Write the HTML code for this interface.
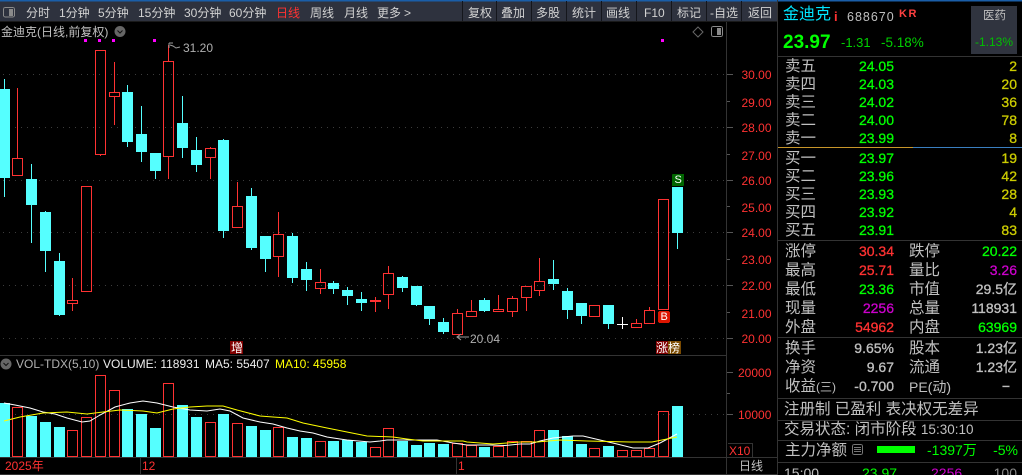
<!DOCTYPE html>
<html><head><meta charset="utf-8">
<style>
html,body{margin:0;padding:0;background:#000;}
#p{position:relative;width:1022px;height:475px;overflow:hidden;background:#000;font-family:"Liberation Sans","WenQuanYi Zen Hei","Noto Sans CJK SC",sans-serif;color:#c0c0c0;}
#p div{position:absolute;white-space:nowrap;line-height:1;}
.t{font-size:12px;top:7px;color:#d2d2d2;}
.l{font-size:15.5px;left:785px;}
.l2{font-size:15.5px;left:909px;}
.v{font-size:14px;right:128px;-webkit-text-stroke:0.3px currentColor;}
.q{font-size:14px;right:5px;-webkit-text-stroke:0.3px currentColor;}
.g{color:#00ff00;} .r{color:#ff3232;} .y{color:#cccc00;} .m{color:#cc00cc;}
.a{font-size:12px;color:#ff3232;left:741.5px;}
svg{position:absolute;left:0;top:0;}
</style></head><body><div id="p">
<svg width="1022" height="475" shape-rendering="crispEdges">
<rect x="0" y="0" width="777" height="21" fill="#2e323e"/>
<rect x="0" y="0" width="1022" height="1.5" fill="#1a5ea8"/>
<rect x="0" y="21" width="777" height="1" fill="#1a1a1a"/>
<path d="M462.5 1v20M496.5 1v20M531.5 1v20M566.5 1v20M601.5 1v20M636.5 1v20M671.5 1v20M706.5 1v20M741.5 1v20" stroke="#14161c"/>
<rect x="3.5" y="7.5" width="11" height="9.5" rx="2" fill="none" stroke="#8a8a8a"/><rect x="9" y="9" width="4" height="7" fill="#8a8a8a"/>
<path d="M0 355.5H726M0 457.5H726M0 474.5H777M726.5 22V475M777.5 0V475M140.5 458v16M456.5 458v16M728 443.5h24M752.5 443v15M727 457.5h50" stroke="#333"/>
<path d="M3 74.5H726M3 127.5H726M3 180.5H726M3 232.5H726M3 285.5H726M3 338.5H726M3 414.5H726" stroke="#3c3c3c" stroke-dasharray="1 5"/>
<path d="M727 74.5h6M727 127.5h6M727 180.5h6M727 232.5h6M727 285.5h6M727 338.5h6M727 414.5h6M727 372.5h6M727 101.5h3M727 154.5h3M727 206.5h3M727 259.5h3M727 312.5h3M727 393.5h3" stroke="#555"/>
<g fill="#ff00ff"><rect x="84" y="39" width="3" height="3"/><rect x="98" y="39" width="3" height="3"/><rect x="112" y="39" width="3" height="3"/><rect x="153" y="39" width="3" height="3"/><rect x="661" y="39" width="3" height="3"/></g>
<path d="M693 32l5-5 5 5-5 5z" fill="none" stroke="#666" shape-rendering="auto"/>
<rect x="711.5" y="26.5" width="11" height="10" rx="2" fill="none" stroke="#8a8a8a"/><rect x="717" y="28" width="4" height="7" fill="#8a8a8a"/>
<circle cx="120" cy="31.5" r="5.5" fill="#666" shape-rendering="auto"/><path d="M117.500 30.500l2.500 2.500 2.500-2.500" fill="none" stroke="#111" shape-rendering="auto"/>
<circle cx="6" cy="364" r="5.5" fill="#666" shape-rendering="auto"/><path d="M3.500 363l2.500 2.500 2.500-2.500" fill="none" stroke="#111" shape-rendering="auto"/>

<path fill="#55ffff" d="M0 89h10v89H0zM26 179h11v26H26zM40 212h11v39H40zM54 261h11v54H54zM122 92h11v50h-11zM136 134h11v18h-11zM150 153h11v18h-11zM177 123h11v25h-11zM191 150h11v15h-11zM218 140h11v91h-11zM246 196h11v52h-11zM260 236h11v23h-11zM287 236h11v42h-11zM301 269h11v11h-11zM328 283h11v6h-11zM342 290h11v6h-11zM356 299h11v4h-11zM397 277h11v11h-11zM411 286h11v19h-11zM424 306h11v13h-11zM438 322h11v10h-11zM479 300h11v11h-11zM548 279h11v5h-11zM562 291h11v19h-11zM576 303h11v13h-11zM603 305h11v19h-11zM672 187h11v46h-11z"/>
<path stroke="#55ffff" fill="none" d="M4.500 79v118M31.500 164v79M45.500 211v61M59.500 253v63M127.500 85v62M141.500 106v56M155.500 153v26M182.500 96v62M196.500 137v35M223.500 139v99M251.500 188v62M265.500 236v36M292.500 233v50M306.500 262v29M333.500 281v13M347.500 287v18M361.500 292v19M402.500 276v16M416.500 286v20M429.500 306v19M443.500 318v16M484.500 298v14M553.500 260v30M567.500 288v31M581.500 303v21M608.500 305v24M677.500 187v62"/>
<path stroke="#ff3232" fill="none" d="M12.500 158.500h10v17h-10zM67.500 300.500h10v3h-10zM81.500 186.500h10v105h-10zM95.500 50.500h10v104h-10zM109.500 92.500h10v4h-10zM163.500 61.500h10v95h-10zM205.500 148.500h10v9h-10zM232.500 206.500h10v21h-10zM273.500 234.500h10v22h-10zM315.500 282.500h10v6h-10zM383.500 273.500h10v21h-10zM452.500 313.500h10v21h-10zM466.500 311.500h10v5h-10zM493.500 309.500h10v2h-10zM507.500 298.500h10v13h-10zM521.500 286.500h10v11h-10zM534.500 281.500h10v9h-10zM589.500 305.500h10v11h-10zM631.500 323.500h10v4h-10zM644.500 310.500h10v13h-10zM658.500 199.500h10v110h-10z
M17.500 88v70M72.500 278v22M72.500 304v7M100.500 155v1M114.500 62v30M114.500 97v28M168.500 45v16M168.500 157v22M210.500 147v1M210.500 158v21M237.500 182v24M278.500 212v22M278.500 257v20M320.500 269v13M320.500 289v5M375.500 297v15M388.500 266v7M388.500 295v14M457.500 309v4M471.500 300v11M498.500 295v14M512.500 296v2M512.500 312v5M526.500 298v13M539.500 258v23M539.500 291v5M636.500 319v4M649.500 307v3"/>
<rect x="370" y="300" width="11" height="2" fill="#ff3232"/>
<path d="M622.500 317v12M617 324.500h11" stroke="#fff"/>

<path stroke="#9a9a9a" fill="none" d="M169 43h4M169 43v5M170 45l3 1 3 2 4-1" shape-rendering="auto"/>
<path stroke="#9a9a9a" fill="none" d="M457 337h12M461 334l-4 3 4 3" shape-rendering="auto"/>

<rect x="230" y="341" width="13" height="13" fill="#800000"/>
<rect x="656" y="341" width="12" height="13" fill="#800000"/>
<rect x="668" y="341" width="13" height="13" fill="#7a4a00"/>
<rect x="672" y="174" width="12" height="12" rx="1" fill="#006600"/>
<rect x="658" y="311" width="12" height="12" rx="2" fill="#dd1500"/>

<path fill="#55ffff" d="M0 403h10v54H0zM26 416h11v41H26zM40 422h11v35H40zM54 427h11v30H54zM122 409h11v48h-11zM136 414h11v43h-11zM150 428h11v29h-11zM177 405h11v52h-11zM191 417h11v40h-11zM218 414h11v43h-11zM246 426h11v31h-11zM260 430h11v27h-11zM287 437h11v20h-11zM301 438h11v19h-11zM328 441h11v16h-11zM342 440h11v17h-11zM356 442h11v15h-11zM397 441h11v16h-11zM411 445h11v12h-11zM424 443h11v14h-11zM438 444h11v13h-11zM479 447h11v10h-11zM548 430h11v27h-11zM562 436h11v21h-11zM576 444h11v13h-11zM603 446h11v11h-11zM672 406h11v51h-11z"/>
<path stroke="#ff3232" fill="none" d="M12.500 407.500h10v49h-10zM67.500 430.500h10v26h-10zM81.500 417.500h10v39h-10zM95.500 375.500h10v81h-10zM109.500 390.500h10v66h-10zM163.500 383.500h10v73h-10zM205.500 422.500h10v34h-10zM232.500 423.500h10v33h-10zM273.500 427.500h10v29h-10zM315.500 441.500h10v15h-10zM370.500 447.500h10v9h-10zM383.500 428.500h10v28h-10zM452.500 443.500h10v13h-10zM466.500 445.500h10v11h-10zM493.500 446.500h10v10h-10zM507.500 441.500h10v15h-10zM521.500 441.500h10v15h-10zM534.500 430.500h10v26h-10zM589.500 448.500h10v8h-10zM617.500 450.500h10v6h-10zM631.500 450.500h10v6h-10zM644.500 448.500h10v8h-10zM658.500 411.500h10v45h-10z"/>
<path stroke="#fff" fill="none" shape-rendering="auto" d="M4 403L15 405L30 408L43 412L55 414L67 418L82 422L90 421L100 415L115 407L130 403L143 401L157 403L173 407L190 410L207 411L220 409L230 411L243 418L260 422L273 424L287 428L300 431L313 433L327 437L340 439L347 440L370 442L380 441L387 440L407 440L437 440L453 443L467 445L490 445L505 445.500L520 444L530 444L540 441L553 438L573 436L583 436L600 440L617 444L633 448L648 448L660 443L677 434"/>
<path stroke="#ff0" fill="none" shape-rendering="auto" d="M4 421L20 417L43 413L67 412L87 414L103 412L120 410L143 411L157 413L173 409L190 407L207 406L223 406L237 410L260 416L273 417L287 418L303 423L327 428L347 432L367 436L393 437L407 439L423 441L463 441L467 442L493 444L520 442L537 442L560 440L587 441L630 442L652 442L677 437"/>

<rect x="778" y="56" width="244" height="1" fill="#333"/>
<rect x="778" y="147" width="135" height="1" fill="#c8962a"/><rect x="913" y="147" width="109" height="1" fill="#3a7fc0"/>
<rect x="778" y="240" width="244" height="1" fill="#333"/><rect x="778" y="337" width="244" height="1" fill="#333"/>
<rect x="778" y="398" width="244" height="1" fill="#333"/><rect x="778" y="420" width="244" height="1" fill="#333"/>
<rect x="778" y="440" width="244" height="1" fill="#333"/><rect x="778" y="462" width="244" height="1" fill="#333"/>
<rect x="971" y="6" width="46" height="48" fill="#30343f"/>
<rect x="877" y="446" width="38" height="7" fill="#00ff00"/>
<rect x="852.500" y="444.500" width="10" height="10" rx="2" fill="none" stroke="#777"/><path d="M854 447.500h7M854 449.500h7M854 451.500h7" stroke="#777"/>
</svg>

<div class="t" style="left:26px">分时</div><div class="t" style="left:59px">1分钟</div><div class="t" style="left:98px">5分钟</div><div class="t" style="left:138px">15分钟</div><div class="t" style="left:184px">30分钟</div><div class="t" style="left:229px">60分钟</div>
<div class="t r" style="left:276px;color:#ff3232">日线</div><div class="t" style="left:310px">周线</div><div class="t" style="left:344px">月线</div><div class="t" style="left:377px">更多</div><div class="t" style="left:404px">&gt;</div>
<div class="t" style="left:468px">复权</div><div class="t" style="left:501px">叠加</div><div class="t" style="left:536px">多股</div><div class="t" style="left:572px">统计</div><div class="t" style="left:606px">画线</div><div class="t" style="left:644px">F10</div><div class="t" style="left:677px">标记</div><div class="t" style="left:710px">-自选</div><div class="t" style="left:748px">返回</div>

<div style="left:1px;top:26px;font-size:12px">金迪克(日线,前复权)</div>
<div style="left:183px;top:42px;font-size:12px;color:#b0b0b0">31.20</div>
<div style="left:470px;top:333px;font-size:12px;color:#b0b0b0">20.04</div>
<div style="left:231px;top:341.500px;font-size:12px;color:#fff">增</div>
<div style="left:656px;top:341.500px;font-size:12px;color:#fff">涨</div><div style="left:668px;top:341.500px;font-size:12px;color:#fff">榜</div>
<div style="left:674.500px;top:175px;font-size:11px;color:#fff">S</div><div style="left:660.500px;top:312px;font-size:11px;color:#fff">B</div>

<div class="a" style="top:69px">30.00</div><div class="a" style="top:97px">29.00</div><div class="a" style="top:122px">28.00</div><div class="a" style="top:150px">27.00</div><div class="a" style="top:175px">26.00</div><div class="a" style="top:202px">25.00</div><div class="a" style="top:227px">24.00</div><div class="a" style="top:254px">23.00</div><div class="a" style="top:280px">22.00</div><div class="a" style="top:308px">21.00</div><div class="a" style="top:333px">20.00</div>
<div class="a" style="top:367px;left:738px">20000</div><div class="a" style="top:409px;left:738px">10000</div>
<div class="a" style="top:445px;left:729px;font-size:12px">X10</div>
<div style="left:739px;top:460px;font-size:12px">日线</div>

<div style="left:16px;top:358px;font-size:12px;color:#b0b0b0">VOL-TDX(5,10)</div>
<div style="left:103px;top:358px;font-size:12px;color:#eee">VOLUME: 118931</div>
<div style="left:205px;top:358px;font-size:12px;color:#eee">MA5: 55407</div>
<div style="left:275px;top:358px;font-size:12px;color:#ff0">MA10: 45958</div>
<div class="r" style="left:5px;top:460px;font-size:12px">2025年</div><div class="r" style="left:142px;top:460px;font-size:12px">12</div><div class="r" style="left:458px;top:460px;font-size:12px">1</div>

<div style="left:783px;top:7px;font-size:16px;color:#00e5ff">金迪克</div><div class="r" style="left:834px;top:10px;font-size:13px;font-weight:bold">i</div>
<div style="left:847px;top:11px;font-size:12.500px;letter-spacing:1px;color:#c0c0c0">688670</div>
<div style="left:899px;top:9px;font-size:11px;font-weight:bold;letter-spacing:1.5px;color:#ff4040">KR</div>
<div style="left:983px;top:11px;font-size:11.500px">医药</div><div class="g" style="left:975px;top:36px;font-size:12px;color:#00c000">-1.13%</div>
<div class="g" style="left:783px;top:33px;font-size:19px;font-weight:bold">23.97</div>
<div class="g" style="left:841px;top:36px;font-size:13px;color:#00d000">-1.31</div><div class="g" style="left:881px;top:36px;font-size:13.500px;color:#00d000">-5.18%</div>

<div class="l" style="top:59px">卖五</div><div class="v g" style="top:59px">24.05</div><div class="q y" style="top:59px">2</div>
<div class="l" style="top:77px">卖四</div><div class="v g" style="top:77px">24.03</div><div class="q y" style="top:77px">20</div>
<div class="l" style="top:95px">卖三</div><div class="v g" style="top:95px">24.02</div><div class="q y" style="top:95px">36</div>
<div class="l" style="top:113px">卖二</div><div class="v g" style="top:113px">24.00</div><div class="q y" style="top:113px">78</div>
<div class="l" style="top:131px">卖一</div><div class="v g" style="top:131px">23.99</div><div class="q y" style="top:131px">8</div>
<div class="l" style="top:151px">买一</div><div class="v g" style="top:151px">23.97</div><div class="q y" style="top:151px">19</div>
<div class="l" style="top:169px">买二</div><div class="v g" style="top:169px">23.96</div><div class="q y" style="top:169px">42</div>
<div class="l" style="top:187px">买三</div><div class="v g" style="top:187px">23.93</div><div class="q y" style="top:187px">28</div>
<div class="l" style="top:205px">买四</div><div class="v g" style="top:205px">23.92</div><div class="q y" style="top:205px">4</div>
<div class="l" style="top:223px">买五</div><div class="v g" style="top:223px">23.91</div><div class="q y" style="top:223px">83</div>

<div class="l" style="top:244px">涨停</div><div class="v r" style="top:244px">30.34</div><div class="l2" style="top:244px">跌停</div><div class="q g" style="top:244px">20.22</div>
<div class="l" style="top:263px">最高</div><div class="v r" style="top:263px">25.71</div><div class="l2" style="top:263px">量比</div><div class="q m" style="top:263px">3.26</div>
<div class="l" style="top:282px">最低</div><div class="v g" style="top:282px">23.36</div><div class="l2" style="top:282px">市值</div><div class="q" style="top:282px">29.5亿</div>
<div class="l" style="top:301px">现量</div><div class="v m" style="top:301px">2256</div><div class="l2" style="top:301px">总量</div><div class="q" style="top:301px">118931</div>
<div class="l" style="top:320px">外盘</div><div class="v r" style="top:320px">54962</div><div class="l2" style="top:320px">内盘</div><div class="q g" style="top:320px">63969</div>

<div class="l" style="top:341px">换手</div><div class="v" style="top:341px">9.65%</div><div class="l2" style="top:341px">股本</div><div class="q" style="top:341px">1.23亿</div>
<div class="l" style="top:360px">净资</div><div class="v" style="top:360px">9.67</div><div class="l2" style="top:360px">流通</div><div class="q" style="top:360px">1.23亿</div>
<div class="l" style="top:379px">收益<span style="font-size:12px">(三)</span></div><div class="v" style="top:379px">-0.700</div><div class="l2" style="top:380px;font-size:14px">PE(动)</div><div class="q" style="top:379px;right:12px">−</div>

<div style="left:784px;top:402px;font-size:15.500px">注册制 已盈利 表决权无差异</div>
<div style="left:784px;top:422px;font-size:15.500px">交易状态: 闭市阶段 <span style="font-size:13.500px">15:30:10</span></div>
<div style="left:785px;top:443px;font-size:15.500px">主力净额</div>
<div class="g" style="left:927px;top:443px;font-size:14px">-1397万</div><div class="g" style="right:4px;top:443px;font-size:14px">-5%</div>
<div style="left:784px;top:466px;font-size:14px">15:00</div><div class="g" style="left:862px;top:466px;font-size:14px">23.97</div><div class="m" style="left:931px;top:466px;font-size:14px">2256</div><div style="right:5px;top:466px;font-size:14px;color:#888">100</div>
</div></body></html>
